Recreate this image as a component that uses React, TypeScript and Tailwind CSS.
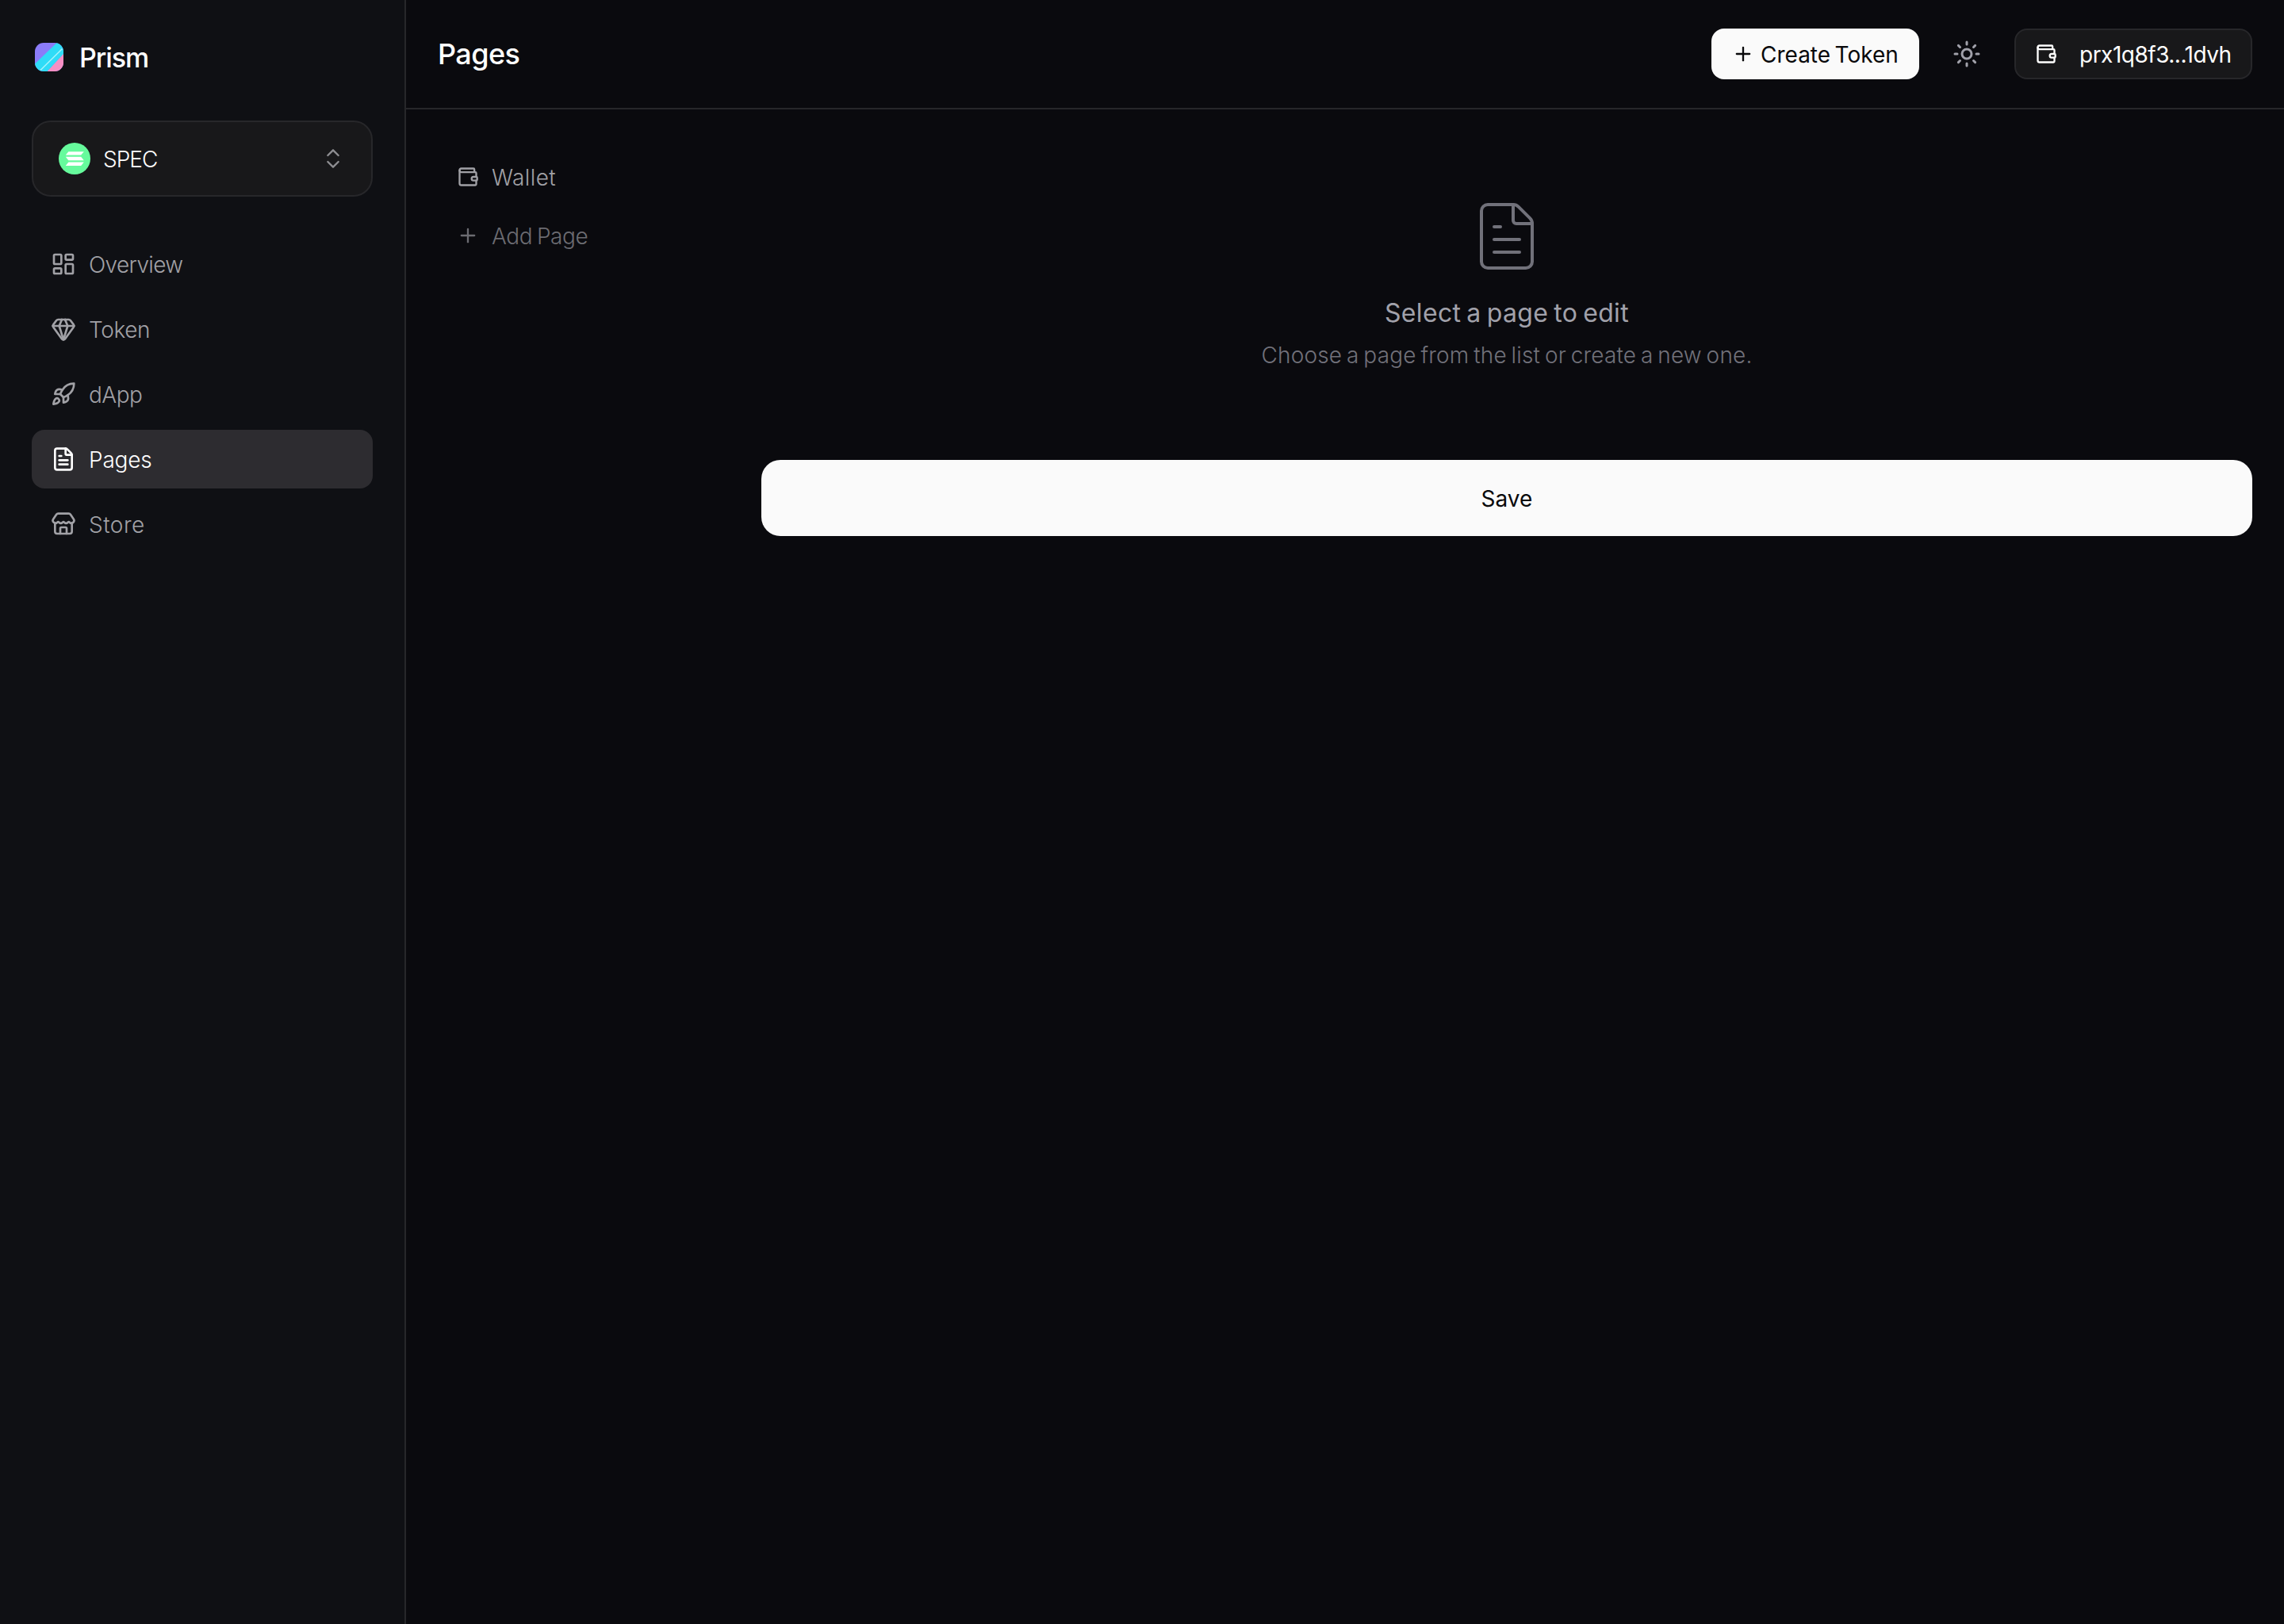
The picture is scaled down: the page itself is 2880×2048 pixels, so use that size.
import React from "react";
import {
  ChevronsUpDown,
  FileText,
  Gem,
  LayoutDashboard,
  Plus,
  Rocket,
  Store,
  Sun,
  Wallet,
  type LucideIcon,
} from "lucide-react";

function PrismLogo() {
  return (
    <svg width="36" height="36" viewBox="0 0 36 36" className="shrink-0" aria-hidden="true">
      <defs>
        <clipPath id="prism-clip">
          <rect width="36" height="36" rx="11" />
        </clipPath>
      </defs>
      <g clipPath="url(#prism-clip)">
        <rect width="36" height="36" fill="#8b7cf8" />
        <path d="M36 13.5L15.5 36H36Z" fill="#f78fc4" />
        <path d="M27.5 0L0 26.5V36H15.5L36 14V0Z" fill="#2fdcf7" />
        <path d="M34.5 7.5L7 34.5" stroke="#a5f3fc" strokeWidth="1.6" />
      </g>
    </svg>
  );
}

function SpecLogo() {
  return (
    <svg width="40" height="40" viewBox="0 0 40 40" className="shrink-0" aria-hidden="true">
      <circle cx="20" cy="20" r="20" fill="#66fa9c" />
      <g fill="#ffffff">
        <path d="M12.4 11.2H31.8L28.2 15.6H8.8Z" />
        <path d="M8.8 17.8H28.2L31.8 22.2H12.4Z" />
        <path d="M12.4 24.6H31.8L28.2 29H8.8Z" />
      </g>
    </svg>
  );
}

type NavEntry = { label: string; icon: LucideIcon; active?: boolean; track: string };

const NAV: NavEntry[] = [
  { label: "Overview", icon: LayoutDashboard, track: "tracking-[-0.65px]" },
  { label: "Token", icon: Gem, track: "tracking-[-0.4px]" },
  { label: "dApp", icon: Rocket, track: "tracking-[-0.5px]" },
  { label: "Pages", icon: FileText, active: true, track: "tracking-[-0.2px]" },
  { label: "Store", icon: Store, track: "tracking-[0.5px]" },
];

function Sidebar() {
  return (
    <aside className="flex w-[512px] shrink-0 flex-col border-r-2 border-[#27272a] bg-[#0f1014] px-10">
      <div className="flex h-[144px] items-center gap-5 pl-1">
        <PrismLogo />
        <span className="pt-0.5 text-[34px] font-medium leading-[48px] tracking-[-1.05px] text-white">Prism</span>
      </div>
      <button className="mt-2 flex h-24 w-[430px] items-center rounded-3xl border-2 border-[#27272a] bg-[#18181a] px-8 text-left">
        <SpecLogo />
        <span className="ml-4 flex-1 pt-0.5 text-[28px] font-light tracking-[-0.95px] text-white">SPEC</span>
        <ChevronsUpDown size={32} strokeWidth={1.75} className="text-[#8e8e92]" />
      </button>
      <nav className="mt-12 flex w-[430px] flex-col gap-2">
        {NAV.map(({ label, icon: Icon, active, track }) => (
          <a
            key={label}
            className={
              active
                ? "flex h-[74px] items-center gap-4 rounded-2xl bg-[#2d2c30] px-6 text-white"
                : "flex h-[74px] items-center gap-4 rounded-2xl px-6 text-[#a1a1a6]"
            }
          >
            <Icon size={32} strokeWidth={2} />
            <span className={`pt-0.5 text-[28px] font-light ${track}`}>{label}</span>
          </a>
        ))}
      </nav>
    </aside>
  );
}

function Header() {
  return (
    <header className="flex h-[138px] shrink-0 items-center border-b-2 border-[#27272a] px-10">
      <h1 className="flex-1 text-[36px] font-medium tracking-[-0.6px] text-white">Pages</h1>
      <button className="flex h-16 w-[262px] items-center rounded-2xl bg-[#fafafa] pl-[26px] text-[#09090b]">
        <Plus size={28} strokeWidth={2} />
        <span className="ml-2 whitespace-nowrap pt-0.5 text-[28px] font-normal [word-spacing:-2.4px]">Create Token</span>
      </button>
      <button className="ml-[42px] text-[#a1a1aa]">
        <Sun size={36} strokeWidth={2} />
      </button>
      <button className="ml-[42px] flex h-16 w-[300px] items-center rounded-2xl border-2 border-[#27272a] bg-[#18181a] pl-6 text-white">
        <Wallet size={28} strokeWidth={2} />
        <span className="ml-7 whitespace-nowrap pt-0.5 text-[28px] font-normal tracking-[-0.5px]">prx1q8f3...1dvh</span>
      </button>
    </header>
  );
}

function PageList() {
  return (
    <div className="flex w-[384px] shrink-0 flex-col">
      <a className="flex h-[74px] items-center gap-4 px-6 text-[#a1a1a6]">
        <Wallet size={28} strokeWidth={2} />
        <span className="pt-0.5 text-[28px] font-light tracking-[0.4px]">Wallet</span>
      </a>
      <a className="flex h-[74px] items-center gap-4 px-6 text-[#6c6c72]">
        <Plus size={28} strokeWidth={2} />
        <span className="pt-0.5 text-[28px] font-light tracking-[-0.45px] [word-spacing:-1.6px]">Add Page</span>
      </a>
    </div>
  );
}

function EmptyState() {
  return (
    <div className="flex h-[394px] flex-col items-center pt-16 text-center">
      <FileText size={96} strokeWidth={1} className="text-[#71717a]" />
      <h2 className="mt-[25px] text-[32px] font-normal leading-[48px] tracking-[0.33px] text-[#a1a1aa] [word-spacing:-2.3px]">
        Select a page to edit
      </h2>
      <p className="mt-2 text-[28px] font-light leading-[42px] tracking-[0.18px] text-[#71717a] [word-spacing:-2.3px]">
        Choose a page from the list or create a new one.
      </p>
    </div>
  );
}

export default function App() {
  return (
    <div className="flex h-[2048px] w-[2880px] overflow-hidden bg-[#0a0a0e] font-['Inter',sans-serif]">
      <Sidebar />
      <div className="flex min-w-0 flex-1 flex-col">
        <Header />
        <main className="flex gap-6 pl-10 pr-10 pt-12">
          <PageList />
          <section className="flex flex-1 flex-col">
            <EmptyState />
            <button className="h-24 w-full rounded-3xl bg-[#fafafa] pt-0.5 text-[28px] font-normal text-[#09090b]">
              Save
            </button>
          </section>
        </main>
      </div>
    </div>
  );
}
